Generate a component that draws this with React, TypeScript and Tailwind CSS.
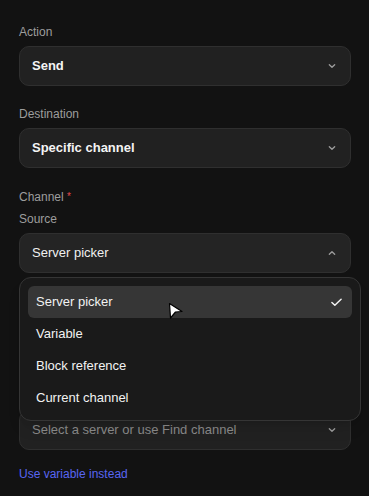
import React from "react";

const Chevron = ({ up = false }: { up?: boolean }) => (
  <svg width="16" height="16" viewBox="0 0 24 24" fill="none" stroke="#9b9b9b" strokeWidth="2" strokeLinecap="round" strokeLinejoin="round">
    {up ? <path d="m8 14 4-4 4 4" /> : <path d="m8 10 4 4 4-4" />}
  </svg>
);

const Label = ({ children }: { children: React.ReactNode }) => (
  <div className="text-[12px] leading-4 text-[#9d9d9d] mb-1.5">{children}</div>
);

const Select = ({
  value,
  bold = false,
  placeholder = false,
  up = false,
  active = false,
}: {
  value: string;
  bold?: boolean;
  placeholder?: boolean;
  up?: boolean;
  active?: boolean;
}) => (
  <div
    className={`h-10 rounded-[10px] border border-[#2f2f2f] ${active ? "bg-[#242424]" : "bg-[#212121]"} flex items-center justify-between pl-3 pr-[10px]`}
  >
    <span
      className={`text-[13px] ${bold ? "font-bold text-[#f4f4f4]" : placeholder ? "text-[#8a8a8a]" : "text-[#f0f0f0]"}`}
    >
      {value}
    </span>
    <Chevron up={up} />
  </div>
);

export default function App() {
  const items = ["Server picker", "Variable", "Block reference", "Current channel"];
  return (
    <div
      className="min-h-[496px] w-[369px] bg-[#121212] pl-[19px] pr-[18px] pt-6 relative"
      style={{ fontFamily: '"Liberation Sans", Arial, sans-serif' }}
    >
      <Label>Action</Label>
      <Select value="Send" bold />
      <div className="h-5" />
      <Label>Destination</Label>
      <Select value="Specific channel" bold />
      <div className="h-[21px]" />
      <div className="text-[12px] leading-4 text-[#9d9d9d]">
        Channel <span className="text-[#e5484d] text-[10px] align-top">*</span>
      </div>
      <div className="h-1.5" />
      <Label>Source</Label>
      <div className="relative z-10">
        <Select value="Server picker" up active />
        <div className="absolute left-0 top-[calc(100%+4px)] w-[342px] rounded-[12px] border border-[#353535] bg-[#1a1a1a] px-2 pt-2 pb-1.5 shadow-lg">
          {items.map((it, i) => (
            <div
              key={it}
              className={`h-8 rounded-[6px] flex items-center justify-between pl-2 pr-[10px] text-[13px] text-[#f2f2f2] ${i === 0 ? "bg-[#363636]" : ""}`}
            >
              <span>{it}</span>
              {i === 0 && (
                <svg width="11" height="9" viewBox="0 0 12 9" fill="none" stroke="#f2f2f2" strokeWidth="1.6" strokeLinecap="round" strokeLinejoin="round">
                  <path d="M1 4.5 4.2 7.6 11 1" />
                </svg>
              )}
            </div>
          ))}
        </div>
      </div>
      <div className="h-[137px]" />
      <Select value="Select a server or use Find channel" placeholder />
      <div className="h-4" />
      <div className="text-[12px] leading-4 text-[#5865f2]">Use variable instead</div>
      <svg
        className="absolute left-[168px] top-[302px] z-20"
        width="16"
        height="18"
        viewBox="0 0 16 18"
      >
        <path d="M1.5 1.5 L14 9.5 L7.5 10 L2.5 16 Z" fill="#fff" stroke="#000" strokeWidth="1.2" strokeLinejoin="round" />
      </svg>
    </div>
  );
}
